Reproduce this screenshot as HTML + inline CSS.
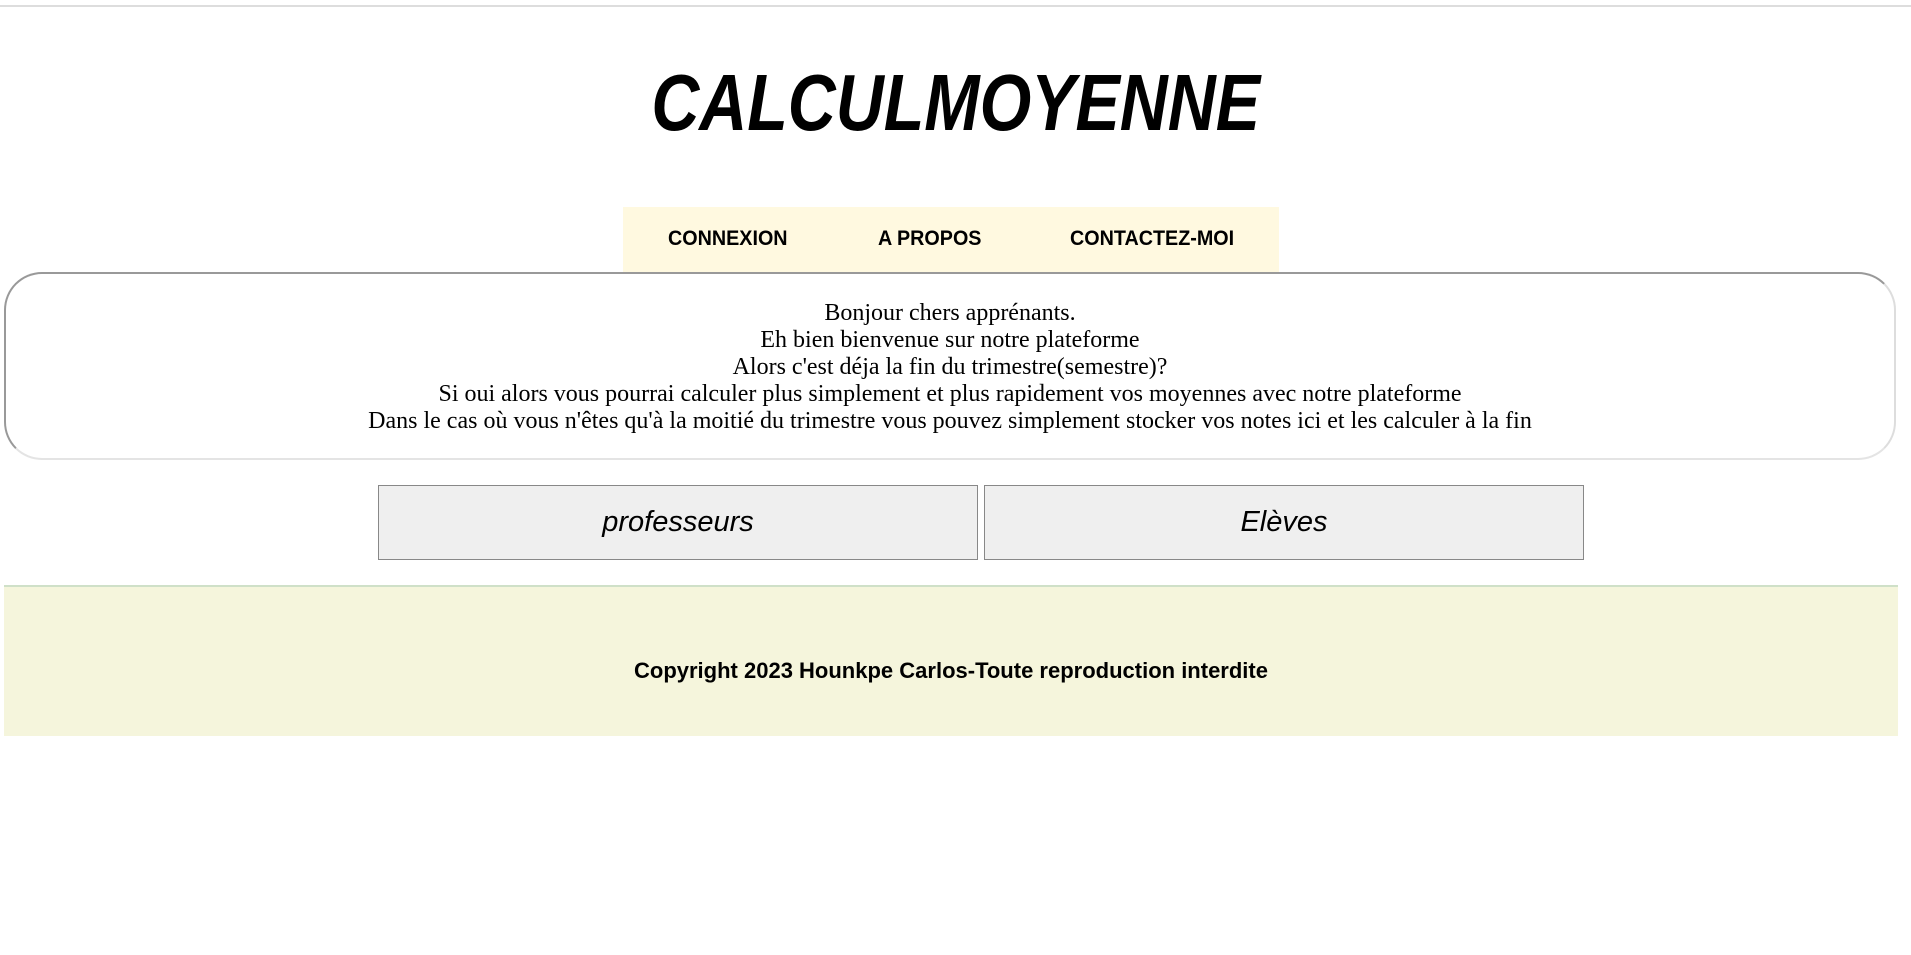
<!DOCTYPE html>
<html><head><meta charset="utf-8"><style>
body{margin:0;width:1911px;height:955px;background:#fff;overflow:hidden;position:relative;font-family:"Liberation Sans",sans-serif}
.top{position:absolute;left:0;top:5px;width:1911px;height:2px;background:#ddd}
h1{position:absolute;left:0;width:1911px;top:58px;margin:0;text-align:center;font:italic bold 80px/90px "Liberation Sans",sans-serif;}
h1 span{display:inline-block;transform:scaleX(0.83)}
.nav{position:absolute;left:623px;top:207px;width:656px;height:66px;background:#fff9e0}
.nav span{position:absolute;top:20px;font:bold 21px/24px "Liberation Sans",sans-serif;transform:scaleX(0.94);transform-origin:left}
.msg{position:absolute;left:4px;top:272px;width:1892px;height:188px;border:2px solid #999;border-bottom-color:#e4e4e4;border-right-color:#ddd;border-radius:38px;text-align:center;font:24px/27px "Liberation Serif",serif;padding-top:26px;box-sizing:border-box}
.btn{position:absolute;top:485px;width:600px;height:75px;background:#efefef;border:1px solid #888;box-sizing:border-box;text-align:center;font:italic 29px/73px "Liberation Sans",sans-serif}
.foot{position:absolute;left:4px;top:585px;width:1894px;height:151px;background:#f5f5dc;border-top:2px solid #cfe0c8;box-sizing:border-box;text-align:center}
.foot span{display:inline-block;margin-top:72px;font:bold 22px/24px "Liberation Sans",sans-serif}
</style></head><body>
<div class="top"></div>
<h1><span>CALCULMOYENNE</span></h1>
<div class="nav"><span style="left:45px">CONNEXION</span><span style="left:255px">A PROPOS</span><span style="left:447px">CONTACTEZ-MOI</span></div>
<div class="msg">Bonjour chers apprénants.<br>Eh bien bienvenue sur notre plateforme<br>Alors c'est déja la fin du trimestre(semestre)?<br>Si oui alors vous pourrai calculer plus simplement et plus rapidement vos moyennes avec notre plateforme<br>Dans le cas où vous n'êtes qu'à la moitié du trimestre vous pouvez simplement stocker vos notes ici et les calculer à la fin</div>
<div class="btn" style="left:378px">professeurs</div>
<div class="btn" style="left:984px">Elèves</div>
<div class="foot"><span>Copyright 2023 Hounkpe Carlos-Toute reproduction interdite</span></div>
</body></html>
